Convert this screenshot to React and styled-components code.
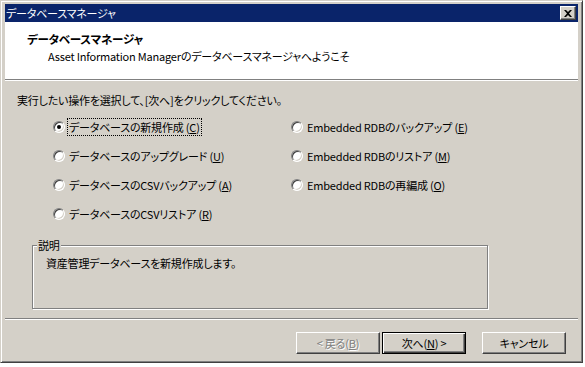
import React from 'react';
import styled, { createGlobalStyle } from 'styled-components';

const GlobalStyle = createGlobalStyle`
  body {
    margin: 0;
    background: #ffffff;
    font-family: "Noto Sans CJK JP", "Liberation Sans", sans-serif;
    font-size: 11px;
    letter-spacing: -0.2px;
    font-feature-settings: "palt";
    color: #000;
  }
`;

const Window = styled.div`
  box-sizing: border-box;
  width: 583px;
  height: 363px;
  padding: 3px 4px 4px 4px;
  background: #d4d0c8;
  border: 1px solid;
  border-color: #d4d0c8 #404040 #404040 #d4d0c8;
  box-shadow: inset 1px 1px #ffffff, inset -1px -1px #808080;
  display: flex;
  flex-direction: column;
`;

const TitleBar = styled.div`
  height: 18px;
  background: #0a246a;
  color: #fff;
  display: flex;
  align-items: center;
  justify-content: space-between;
  padding: 0 2px 0 1px;
  line-height: 18px;
`;

const CloseButton = styled.div`
  box-sizing: border-box;
  width: 16px;
  height: 14px;
  background: #d4d0c8;
  border: 1px solid;
  border-color: #ffffff #404040 #404040 #ffffff;
  box-shadow: inset -1px -1px #808080;
  display: flex;
  align-items: center;
  justify-content: center;
`;

const Header = styled.div`
  height: 58px;
  background: #fff;
  border-bottom: 1px solid #808080;
  box-shadow: 0 1px #ffffff;
  padding: 10px 0 0 22px;
  box-sizing: border-box;
`;

const HeaderTitle = styled.div`
  font-weight: bold;
  font-size: 11.5px;
  line-height: 15px;
`;

const HeaderSub = styled.div`
  margin: 2px 0 0 21px;
  line-height: 14px;
`;

const Body = styled.div`
  flex: 1;
  padding: 12px 0 0 12px;
  margin-top: 1px;
  border-bottom: 1px solid #808080;
  box-shadow: 0 1px #ffffff;
`;

const Instruction = styled.div`
  line-height: 14px;
`;

const RadioGrid = styled.div`
  display: grid;
  grid-template-columns: 238px auto;
  grid-auto-flow: column;
  grid-template-rows: repeat(4, 29px);
  margin: 5px 0 0 36px;
`;

const RadioRow = styled.div`
  display: flex;
  align-items: center;
  gap: 2px;
`;

const Circle = styled.span`
  box-sizing: border-box;
  width: 12px;
  height: 12px;
  border-radius: 50%;
  background: #fff;
  border: 1px solid;
  border-color: #808080 #ffffff #ffffff #808080;
  box-shadow: inset 1px 1px #404040, inset -1px -1px #d4d0c8;
  display: flex;
  align-items: center;
  justify-content: center;
  &::after {
    content: '';
    width: 4px;
    height: 4px;
    border-radius: 50%;
    background: ${p => (p.checked ? '#000' : 'transparent')};
  }
`;

const Label = styled.span`
  padding: 1px;
  line-height: 14px;
  border: 1px dotted ${p => (p.focused ? '#000' : 'transparent')};
  white-space: nowrap;
`;

const GroupBox = styled.fieldset`
  box-sizing: border-box;
  width: 456px;
  height: 71px;
  margin: 10px 0 0 15px;
  padding: 4px 0 0 13px;
  border: 1px solid #808080;
  box-shadow: inset 1px 1px #ffffff, 1px 1px #ffffff;
`;

const Legend = styled.legend`
  padding: 0 1px;
  margin-left: -9px;
  background: #d4d0c8;
  line-height: 14px;
`;

const Description = styled.div`
  line-height: 14px;
`;

const Footer = styled.div`
  height: 38px;
  margin-top: 1px;
  display: flex;
  align-items: flex-start;
  justify-content: flex-end;
  padding: 12px 12px 0 0;
  box-sizing: border-box;
`;

const Button = styled.div`
  box-sizing: border-box;
  width: 84px;
  height: 22px;
  margin-left: ${p => p.gap || 0}px;
  display: flex;
  align-items: center;
  justify-content: center;
  border: 1px solid;
  border-color: ${p => (p.primary ? '#000' : '#ffffff #404040 #404040 #ffffff')};
  box-shadow: ${p =>
    p.primary
      ? 'inset 1px 1px #ffffff, inset -1px -1px #404040, inset -2px -2px #808080'
      : 'inset -1px -1px #808080'};
  color: ${p => (p.disabled ? '#808080' : '#000')};
  text-shadow: ${p => (p.disabled ? '1px 1px #ffffff' : 'none')};
  white-space: nowrap;
`;

const U = styled.span`
  text-decoration: underline;
  text-underline-offset: 1px;
`;

const options = [
  ['データベースの新規作成 ', 'C'],
  ['データベースのアップグレード ', 'U'],
  ['データベースのCSVバックアップ ', 'A'],
  ['データベースのCSVリストア ', 'R'],
  ['Embedded RDBのバックアップ ', 'E'],
  ['Embedded RDBのリストア ', 'M'],
  ['Embedded RDBの再編成 ', 'O'],
];

export default function App() {
  return (
    <>
      <GlobalStyle />
      <Window>
        <TitleBar>
          <span>データベースマネージャ</span>
          <CloseButton>
            <svg width="8" height="7" viewBox="0 0 8 7">
              <path d="M0 0h2l2 2 2-2h2L5 3.5 8 7H6L4 5 2 7H0l3-3.5z" fill="#000" />
            </svg>
          </CloseButton>
        </TitleBar>
        <Header>
          <HeaderTitle>データベースマネージャ</HeaderTitle>
          <HeaderSub>Asset Information Managerのデータベースマネージャへようこそ</HeaderSub>
        </Header>
        <Body>
          <Instruction>実行したい操作を選択して、[次へ]をクリックしてください。</Instruction>
          <RadioGrid>
            {options.map(([text, key], i) => (
              <RadioRow key={key}>
                <Circle checked={i === 0} />
                <Label focused={i === 0}>
                  {text}(<U>{key}</U>)
                </Label>
              </RadioRow>
            ))}
          </RadioGrid>
          <GroupBox>
            <Legend>説明</Legend>
            <Description>資産管理データベースを新規作成します。</Description>
          </GroupBox>
        </Body>
        <Footer>
          <Button disabled>&lt; 戻る(<U>B</U>)</Button>
          <Button primary gap={2}>次へ(<U>N</U>) &gt;</Button>
          <Button gap={16}>キャンセル</Button>
        </Footer>
      </Window>
    </>
  );
}
